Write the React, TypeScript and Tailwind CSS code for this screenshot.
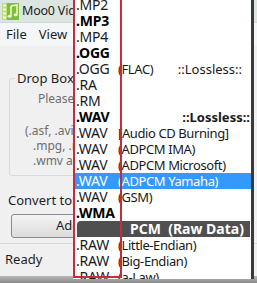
import React from "react";

const rows: { name: string; bold?: boolean; detail?: string; right?: string; rightBold?: boolean; selected?: boolean; header?: boolean }[] = [
  { name: ".MP2" },
  { name: ".MP3", bold: true },
  { name: ".MP4" },
  { name: ".OGG", bold: true },
  { name: ".OGG", detail: "(FLAC)", right: "::Lossless::" },
  { name: ".RA" },
  { name: ".RM" },
  { name: ".WAV", bold: true, right: "::Lossless::", rightBold: true },
  { name: ".WAV", detail: "[Audio CD Burning]" },
  { name: ".WAV", detail: "(ADPCM IMA)" },
  { name: ".WAV", detail: "(ADPCM Microsoft)" },
  { name: ".WAV", detail: "(ADPCM Yamaha)", selected: true },
  { name: ".WAV", detail: "(GSM)" },
  { name: ".WMA", bold: true },
  { name: "PCM  (Raw Data)", header: true },
  { name: ".RAW", detail: "(Little-Endian)" },
  { name: ".RAW", detail: "(Big-Endian)" },
  { name: ".RAW", detail: "(a-Law)" },
];

function AppIcon() {
  return (
    <svg width="17" height="17" viewBox="0 0 17 17">
      <rect x="0" y="0" width="17" height="17" fill="#7cbf3a" />
      <rect x="0" y="0" width="5" height="17" fill="#b9df7a" />
      <rect x="1" y="1.5" width="3" height="2" fill="#f4fbe8" />
      <rect x="1" y="5.5" width="3" height="2" fill="#f4fbe8" />
      <rect x="1" y="9.5" width="3" height="2" fill="#f4fbe8" />
      <rect x="1" y="13.5" width="3" height="2" fill="#f4fbe8" />
      <path d="M9 3 L15 2 L15 11.5" stroke="#eef7c8" strokeWidth="1.6" fill="none" />
      <line x1="9" y1="3" x2="9" y2="13" stroke="#eef7c8" strokeWidth="1.6" />
      <ellipse cx="7.6" cy="13.3" rx="2" ry="1.5" fill="#eef7c8" />
      <ellipse cx="13.6" cy="11.8" rx="2" ry="1.5" fill="#eef7c8" />
    </svg>
  );
}

export default function App() {
  return (
    <div
      className="relative w-[257px] h-[283px] overflow-hidden bg-[#f0f0f0] text-[#1e1e1e]"
      style={{ fontFamily: '"Noto Sans", "Open Sans", sans-serif' }}
    >
      {/* Window */}
      <div className="flex flex-col h-full">
        <div className="h-[23px] bg-[#dde5e1] flex items-center pl-[2px] gap-[3px] border-b border-[#cfd8d4]">
          <AppIcon />
          <span className="text-[12.5px] tracking-[-0.2px] whitespace-nowrap">Moo0 VideoConverter</span>
        </div>
        <div className="h-[23px] bg-[#f5f6f7] flex items-center gap-[12px] pl-[6px] text-[13px]">
          <span>File</span>
          <span>View</span>
        </div>
        <div className="flex-1 flex flex-col">
          <fieldset className="ml-[9px] mt-[25px] w-[236px] h-[105px] border border-[#d3dbe0] rounded-[3px] text-[12px] text-[#6e6e6e]">
            <legend className="ml-[5px] px-[2px] text-[13px] text-[#1e1e1e] leading-[14px]">Drop Box</legend>
            <div className="pl-[28px] pt-[5px] whitespace-nowrap">Please drop files here.</div>
            <div className="pl-[15px] pt-[15px] whitespace-nowrap leading-[15px]">(.asf, .avi, .flv, .mkv,</div>
            <div className="pl-[23px] whitespace-nowrap leading-[15px]">.mpg, .mp4, .mov, .rm,</div>
            <div className="pl-[23px] whitespace-nowrap leading-[15px]">.wmv and more)</div>
          </fieldset>
          <div className="pl-[8px] mt-[16px] text-[13px] whitespace-nowrap leading-[16px]">Convert to:</div>
          <div className="ml-[11px] mt-[6px] w-[200px] h-[24px] rounded-[3px] border border-[#8a8a8a] bg-gradient-to-b from-[#f4f4f4] to-[#dcdcdc] flex items-center pl-[44px] text-[13px]">
            Add
          </div>
          <div className="mt-[5px] border-t border-[#d8d8d8] h-[33px] flex items-center pl-[5px] text-[13px]">Ready</div>
          <div className="flex-1 bg-gradient-to-b from-[#b8b8b8] to-[#8a8a8a]" />
        </div>
      </div>

      {/* Dropdown list */}
      <div className="absolute left-[73px] top-[-3px] w-[181px] h-[282px] bg-white border-r-[3px] border-[#3a3a3a] overflow-hidden text-[13px]">
        {rows.map((r, i) => {
          if (r.header) {
            return (
              <div
                key={i}
                className="h-[16px] ml-[4px] mr-[1px] bg-[#4f4f4f] rounded-tl-[4px] text-white text-[14px] font-bold flex items-center pl-[53px] whitespace-pre leading-none"
              >
                {r.name}
              </div>
            );
          }
          return (
            <div
              key={i}
              className={`h-[16px] flex items-center pl-[3px] whitespace-nowrap leading-none ${
                r.selected ? "bg-[#3399ff] text-white" : "text-[#1a1a1a]"
              }`}
            >
              <span className={`w-[42px] shrink-0 text-[14px] tracking-[-0.2px] ${r.bold ? "font-bold text-black" : ""}`}>{r.name}</span>
              {r.detail && <span className="tracking-[-0.4px]">{r.detail}</span>}
              {r.right && (
                <span className={`ml-auto ${r.rightBold ? "font-bold pr-[1px]" : "pr-[9px]"}`}>{r.right}</span>
              )}
            </div>
          );
        })}
      </div>

      {/* Red annotation rectangle */}
      <div className="absolute left-[73px] top-[-5px] w-[49px] h-[283px] border-2 border-[#c62c40]" />
    </div>
  );
}
